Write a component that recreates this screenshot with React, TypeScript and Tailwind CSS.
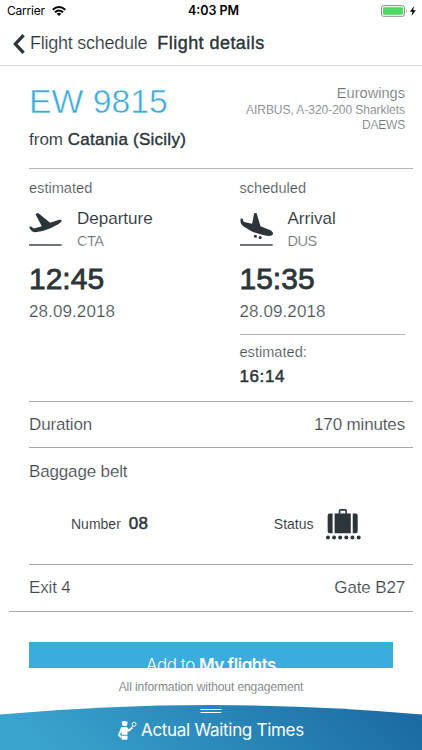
import type { ReactNode } from 'react';

interface LegProps {
  label: string;
  title: string;
  airport: string;
  time: string;
  date: string;
  icon: ReactNode;
}

const DepartureIcon = () => (
  <svg viewBox="87 187 98 101" className="h-[34px] w-[33px]" fill="#2b353a">
    <path d="M87 231L93 230Q99 235 102 236L125 229L106 193L114 190L150 219L170 212C182 208 188 212 182 217Q176 224 151 235Q128 245 105 247Q94 248 87 231Z" />
    <rect x="87" y="283" width="97" height="4" />
  </svg>
);

const ArrivalIcon = () => (
  <svg viewBox="85 187 98 101" className="h-[34px] w-[33px]" fill="#2b353a">
    <path d="M87 206L93 207Q94 214 97 217L121 222L127 191L134 190L146 229L170 239Q184 244 183 253Q180 261 160 257Q138 252 119 244L96 230Q84 223 87 206Z" />
    <circle cx="131" cy="259" r="4.5" />
    <circle cx="145" cy="263" r="4.5" />
    <rect x="85" y="283" width="97" height="4" />
  </svg>
);

const BaggageIcon = () => (
  <svg viewBox="342 350 106 96" className="h-8 w-[35px]" fill="#2b353a">
    <path d="M362 366H353Q347 366 347 373V419Q347 426 353 426H362Z" />
    <path d="M423 366H432Q438 366 438 373V419Q438 426 432 426H423Z" />
    <rect x="368" y="366" width="49" height="60" />
    <path d="M383 367V358Q383 355 386 355H400Q403 355 403 358V367" fill="none" stroke="#2b353a" strokeWidth="5" />
    {[348, 366.5, 385, 403.5, 422, 441].map((cx) => (
      <circle key={cx} cx={cx} cy="439" r="6" />
    ))}
  </svg>
);

const SecurityIcon = () => (
  <svg viewBox="354 299 58 58" className="h-[19px] w-[19px]" fill="white">
    <path d="M365 301L374 299L383 301V307Q382 315 374 315Q366 315 366 307Z" />
    <path d="M364 317H381L387 324L396 317L400 321L387 332L383 330V341H365V330L360 340L366 347L362 352L354 342Z" />
    <path d="M365 344H383V356H365Z" />
    <circle cx="403" cy="309" r="6" fill="none" stroke="white" strokeWidth="3" />
    <path d="M399 314L395 321" stroke="white" strokeWidth="3" />
  </svg>
);

const StatusBar = () => (
  <div className="flex h-[22px] items-center justify-between pl-[7px] pr-[5px] font-['Inter'] text-black">
    <div className="flex flex-1 items-center gap-[7px]">
      <span className="text-[12px] leading-[22px] tracking-[-0.2px]">Carrier</span>
      <svg viewBox="0 0 14 10" className="h-[10px] w-[14px]" fill="none" stroke="black" strokeWidth="1.9">
        <path d="M0.7 3.7Q7 -1.7 13.3 3.7" />
        <path d="M2.9 6.2Q7 2.6 11.1 6.2" />
        <path d="M4.7 7.7Q7 5.9 9.3 7.7L7 10Z" fill="black" stroke="none" />
      </svg>
    </div>
    <span className="pl-[3px] text-[12.5px] font-semibold leading-[22px]">4:03 PM</span>
    <div className="flex flex-1 items-center justify-end">
      <svg viewBox="0 0 37 12" className="h-3 w-[37px]">
        <rect x="1.5" y="0.7" width="23" height="10.6" rx="2" fill="none" stroke="#8b8b8b" />
        <rect x="3" y="2.2" width="20" height="7.6" rx="0.8" fill="#4cd964" />
        <path d="M26 4Q27.6 6 26 8Z" fill="#8b8b8b" />
        <path d="M34 1L30 6.7H32.5L31.5 11L35.900 5.200H33.200Z" fill="black" />
      </svg>
    </div>
  </div>
);

const NavBar = () => (
  <div className="flex h-11 items-center border-b border-[#d9d9db] pl-[13px] text-[18px] text-[#2b353a]">
    <svg viewBox="0 0 12 20" className="mr-[5px] h-5 w-3" fill="none" stroke="#2b353a" strokeWidth="3.3">
      <path d="M10.6 1.2L2.4 10L10.6 18.8" />
    </svg>
    <span className="mr-[10px] tracking-[-0.25px] [-webkit-text-stroke:0.2px_white]">Flight schedule</span>
    <span className="tracking-[0.45px] [-webkit-text-stroke:0.4px_#2b353a]">Flight details</span>
  </div>
);

const Leg = ({ label, title, airport, time, date, icon }: LegProps) => (
  <div className="flex flex-col">
    <span className="h-5 text-[14.6px] leading-5 text-[#464f54] [-webkit-text-stroke:0.2px_white]">{label}</span>
    <div className="mt-[9px] flex gap-[15px]">
      <div className="pt-[5px]">{icon}</div>
      <div className="flex flex-col">
        <span className="h-[23px] text-[17px] leading-[23px] text-[#2b353a] [-webkit-text-stroke:0.1px_white]">{title}</span>
        <span className="h-[22px] text-[14.6px] leading-[22px] tracking-[-0.5px] text-[#6b7174] [-webkit-text-stroke:0.2px_white]">{airport}</span>
      </div>
    </div>
    <span className="mt-[7px] h-10 text-[30px] leading-10 text-[#2b353a] [-webkit-text-stroke:0.8px_#2b353a]">{time}</span>
    <span className="mt-px h-6 text-[17px] leading-6 tracking-[0.1px] text-[#464f54] [-webkit-text-stroke:0.2px_white]">{date}</span>
  </div>
);

const Row = ({ left, right }: { left: string; right: string }) => (
  <div className="flex h-[46px] items-center justify-between border-b border-[#a9a9a9] pr-2 text-[17px] tracking-[-0.15px] text-[#3d464b] [-webkit-text-stroke:0.2px_white]">
    <span>{left}</span>
    <span>{right}</span>
  </div>
);

export default function App() {
  return (
    <div className="flex h-[750px] w-[422px] flex-col overflow-hidden bg-white font-['Liberation_Sans',sans-serif]">
      <StatusBar />
      <NavBar />

      <main className="h-[602px] overflow-hidden">
        {/* Flight header */}
        <section className="ml-[29px] mr-[9px] flex h-[103px] justify-between border-b border-[#b3b3b3] pr-2">
          <div className="flex flex-col pt-[15px]">
            <h1 className="h-10 text-[33.75px] leading-10 text-[#3dabdb] [-webkit-text-stroke:0.5px_white]">EW 9815</h1>
            <p className="mt-[7px] h-6 text-[17px] leading-6 text-[#2b353a]">
              <span className="[-webkit-text-stroke:0.1px_white]">from</span>{' '}
              <span className="tracking-[0.25px] [-webkit-text-stroke:0.4px_#2b353a]">Catania (Sicily)</span>
            </p>
          </div>
          <div className="flex flex-col items-end pt-[19px] text-[#6b7174] [-webkit-text-stroke:0.2px_white]">
            <span className="h-[17px] text-[14.6px] leading-[17px]">Eurowings</span>
            <span className="h-4 text-[12px] leading-4 tracking-[-0.04px]">AIRBUS, A-320-200 Sharklets</span>
            <span className="h-[14px] text-[12px] leading-[14px] tracking-[-0.2px]">DAEWS</span>
          </div>
        </section>

        {/* Departure and arrival */}
        <section className="ml-[29px] mr-[9px] grid h-[233px] grid-cols-[210.5px_1fr] border-b border-[#a9a9a9] pt-[9px]">
          <Leg label="estimated" title="Departure" airport="CTA" time="12:45" date="28.09.2018" icon={<DepartureIcon />} />
          <div className="flex flex-col pr-2">
            <Leg label="scheduled" title="Arrival" airport="DUS" time="15:35" date="28.09.2018" icon={<ArrivalIcon />} />
            <div className="mt-[10px] flex flex-col border-t border-[#b3b3b3] pt-[7px]">
              <span className="h-5 text-[14.6px] leading-5 text-[#464f54] [-webkit-text-stroke:0.2px_white]">estimated:</span>
              <span className="mt-[3px] h-6 text-[17px] leading-6 tracking-[0.6px] text-[#2b353a] [-webkit-text-stroke:0.5px_#2b353a]">16:14</span>
            </div>
          </div>
        </section>

        <section className="ml-[29px] mr-[9px]">
          <Row left="Duration" right="170 minutes" />
          <div className="flex h-[117px] flex-col border-b border-[#a9a9a9] pt-3">
            <span className="h-6 text-[17px] leading-6 tracking-[-0.15px] text-[#3d464b] [-webkit-text-stroke:0.2px_white]">Baggage belt</span>
            <div className="mt-[22px] flex h-9 items-center pl-[42px] text-[14px] text-[#2b353a]">
              <span className="mr-2 [-webkit-text-stroke:0.1px_white]">Number</span>
              <span className="w-[145px] text-[17px] tracking-[0.2px] [-webkit-text-stroke:0.5px_#2b353a]">08</span>
              <span className="mr-3 [-webkit-text-stroke:0.1px_white]">Status</span>
              <BaggageIcon />
            </div>
          </div>
        </section>

        <section className="ml-[9px] mr-[9px] border-b border-[#a9a9a9] pl-5">
          <div className="flex h-[46px] items-center justify-between pr-2 text-[17px] tracking-[-0.15px] text-[#3d464b] [-webkit-text-stroke:0.2px_white]">
            <span>Exit 4</span>
            <span>Gate B27</span>
          </div>
        </section>

        <button className="ml-[29px] mt-[30px] flex h-[47px] w-[364px] items-center justify-center bg-[#3aacde] font-['Inter'] text-[17px] tracking-[-0.5px] text-white">
          <span>
            <span className="font-light">Add to</span> <span className="font-semibold">My flights</span>
          </span>
        </button>
      </main>

      <footer className="flex h-[82px] flex-col">
        <p className="h-[37px] text-center text-[12px] leading-[38px] tracking-[-0.08px] text-[#5b6367] [-webkit-text-stroke:0.2px_white]">
          All information without engagement
        </p>
        <div className="relative h-[45px]">
          <svg viewBox="0 0 422 45" className="absolute inset-0 h-[45px] w-full">
            <defs>
              <linearGradient id="wave" x1="0" x2="1" y1="0.1" y2="0">
                <stop offset="0" stopColor="#3aa4ce" />
                <stop offset="1" stopColor="#1968a1" />
              </linearGradient>
            </defs>
            <path d="M0 9.5Q211 -9.5 422 9.5V45H0Z" fill="url(#wave)" />
            <path d="M200.5 4.5H221.5M200.5 7.500H221.500" stroke="white" strokeWidth="1" />
          </svg>
          <div className="relative flex h-[45px] items-center gap-1 pl-[118px] pt-[5px] text-white">
            <SecurityIcon />
            <span className="font-['Inter'] text-[17px] leading-6 tracking-[-0.3px]">Actual Waiting Times</span>
          </div>
        </div>
      </footer>
    </div>
  );
}
